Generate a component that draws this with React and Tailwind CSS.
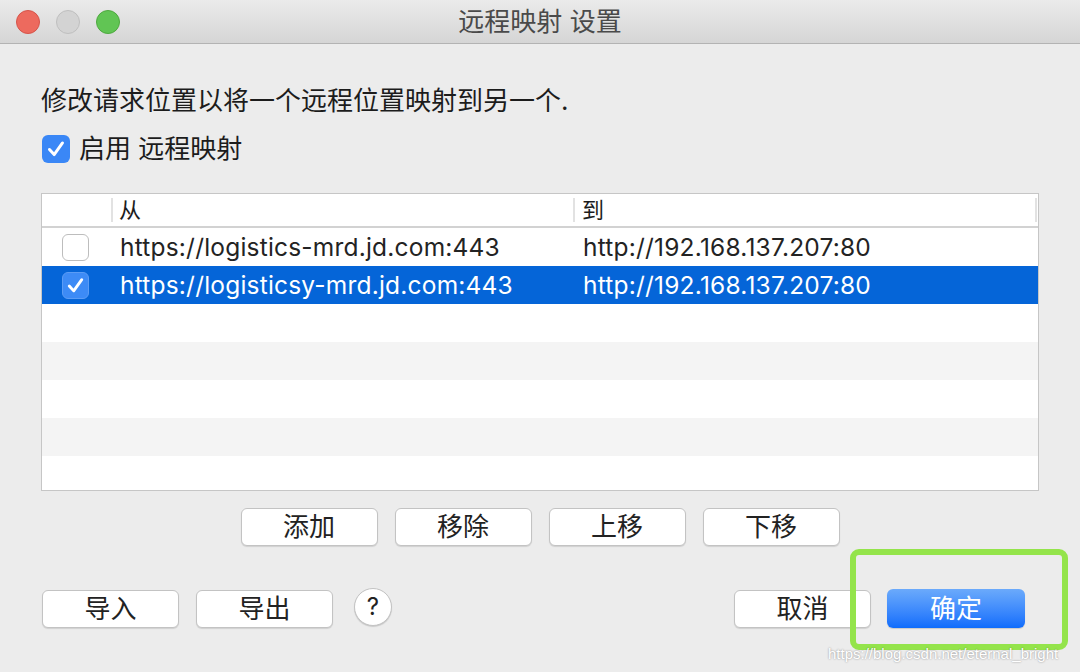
import React from "react";

const Check = ({ className }) => (
  <svg viewBox="0 0 28 28" className={className}>
    <path d="M7 14.5 L12 20 L21 7.5" fill="none" stroke="white" strokeWidth="3.2" strokeLinecap="round" strokeLinejoin="round" />
  </svg>
);

const Btn = ({ children, className = "" }) => (
  <button className={"h-[38px] w-[137px] rounded-[6px] bg-white border border-[#c3c3c3] shadow-[0_1px_1px_rgba(0,0,0,0.12)] text-[26px] text-[#222] leading-none flex items-center justify-center " + className}>
    {children}
  </button>
);

const rows = [
  { from: "https://logistics-mrd.jd.com:443", to: "http://192.168.137.207:80", on: false },
  { from: "https://logisticsy-mrd.jd.com:443", to: "http://192.168.137.207:80", on: true },
];

const App = () => (
  <div className="relative w-[1080px] h-[672px] overflow-hidden bg-[#ececec] font-['Inter','Noto_Sans_CJK_SC',sans-serif] text-[#1c1c1c]">
    {/* title bar */}
    <div className="h-[44px] flex items-center relative bg-gradient-to-b from-[#ebebeb] to-[#d5d5d5] border-b border-[#b3b3b3]">
      <div className="flex items-center gap-[16px] pl-[16px]">
        <span className="w-[24px] h-[24px] rounded-full bg-[#ed6a5e] border border-[#d6544a]" />
        <span className="w-[24px] h-[24px] rounded-full bg-[#d3d3d3] border border-[#bfbfbf]" />
        <span className="w-[24px] h-[24px] rounded-full bg-[#61c554] border border-[#4ea93f]" />
      </div>
      <div className="absolute inset-0 flex items-center justify-center text-[26px] text-[#4a4a4a]">远程映射 设置</div>
    </div>

    <div className="pl-[41px] pr-[41px]">
      <p className="mt-[40px] h-[34px] leading-[34px] text-[26px]">修改请求位置以将一个远程位置映射到另一个.</p>

      <div className="mt-[17px] flex items-center h-[28px] gap-[9px]">
        <span className="w-[28px] h-[28px] ml-[1px] rounded-[6px] bg-[#3a87f6] flex items-center justify-center">
          <Check className="w-[26px] h-[26px]" />
        </span>
        <span className="text-[26px] leading-none">启用 远程映射</span>
      </div>

      {/* table */}
      <div className="mt-[30px] h-[298px] w-[998px] border border-[#c6c6c6] bg-white flex flex-col overflow-hidden">
        <div className="h-[34px] flex items-center border-b-2 border-[#d2d2d2] text-[22px] shrink-0">
          <div className="w-[71px] h-[24px] border-r-2 border-[#e2e2e2]" />
          <div className="w-[462px] pl-[6px] h-[24px] leading-[24px] border-r-2 border-[#e2e2e2]">从</div>
          <div className="flex-1 pl-[7px] h-[24px] leading-[24px] border-r-2 border-[#e2e2e2] mr-[1px]">到</div>
        </div>
        {rows.map((r, i) => (
          <div key={i} className={"h-[38px] flex items-center text-[24.5px] tracking-[0.2px] shrink-0 " + (r.on ? "bg-[#0565d8] text-white" : "text-[#232323]")}>
            <div className="w-[72px] pl-[20px] flex items-center">
              {r.on ? (
                <span className="w-[27px] h-[27px] rounded-[6px] bg-[#3d8bf6] border border-[#5b9cf5] flex items-center justify-center">
                  <Check className="w-[25px] h-[25px]" />
                </span>
              ) : (
                <span className="w-[27px] h-[27px] rounded-[6px] bg-white border border-[#bdbdbd]" />
              )}
            </div>
            <div className="w-[463px] pl-[6px]">{r.from}</div>
            <div className="flex-1 pl-[6px]">{r.to}</div>
          </div>
        ))}
        <div className="h-[38px] shrink-0 bg-white" />
        <div className="h-[38px] shrink-0 bg-[#f4f4f4]" />
        <div className="h-[38px] shrink-0 bg-white" />
        <div className="h-[38px] shrink-0 bg-[#f4f4f4]" />
        <div className="flex-1 bg-white" />
      </div>

      <div className="mt-[17px] flex justify-center gap-[17px]">
        <Btn>添加</Btn>
        <Btn>移除</Btn>
        <Btn>上移</Btn>
        <Btn>下移</Btn>
      </div>

      <div className="mt-[43px] flex items-center">
        <Btn className="ml-[1px]">导入</Btn>
        <Btn className="ml-[17px]">导出</Btn>
        <span className="ml-[21px] -mt-[4px] w-[38px] h-[38px] rounded-full bg-white border border-[#c3c3c3] shadow-[0_1px_1px_rgba(0,0,0,0.15)] flex items-center justify-center text-[24px] text-[#222]">?</span>
        <Btn className="ml-auto">取消</Btn>
        <button className="ml-[16px] mr-[14px] h-[39px] w-[138px] rounded-[6px] bg-gradient-to-b from-[#6baafb] to-[#0d6cfc] text-white text-[26px] leading-none flex items-center justify-center shadow-[0_1px_1px_rgba(0,0,0,0.15)]">确定</button>
      </div>
    </div>

    {/* annotation overlay */}
    <div className="absolute left-[850px] top-[549px] w-[218px] h-[101px] border-[6px] border-[#94e44b] rounded-[9px]" />
    <div className="absolute left-[828px] top-[645px] text-[15px] leading-[18px] text-white [text-shadow:0_0_2px_rgba(0,0,0,0.45)] font-['Liberation_Sans',sans-serif]">https://blog.csdn.net/eternal_bright</div>
  </div>
);

export default App;
